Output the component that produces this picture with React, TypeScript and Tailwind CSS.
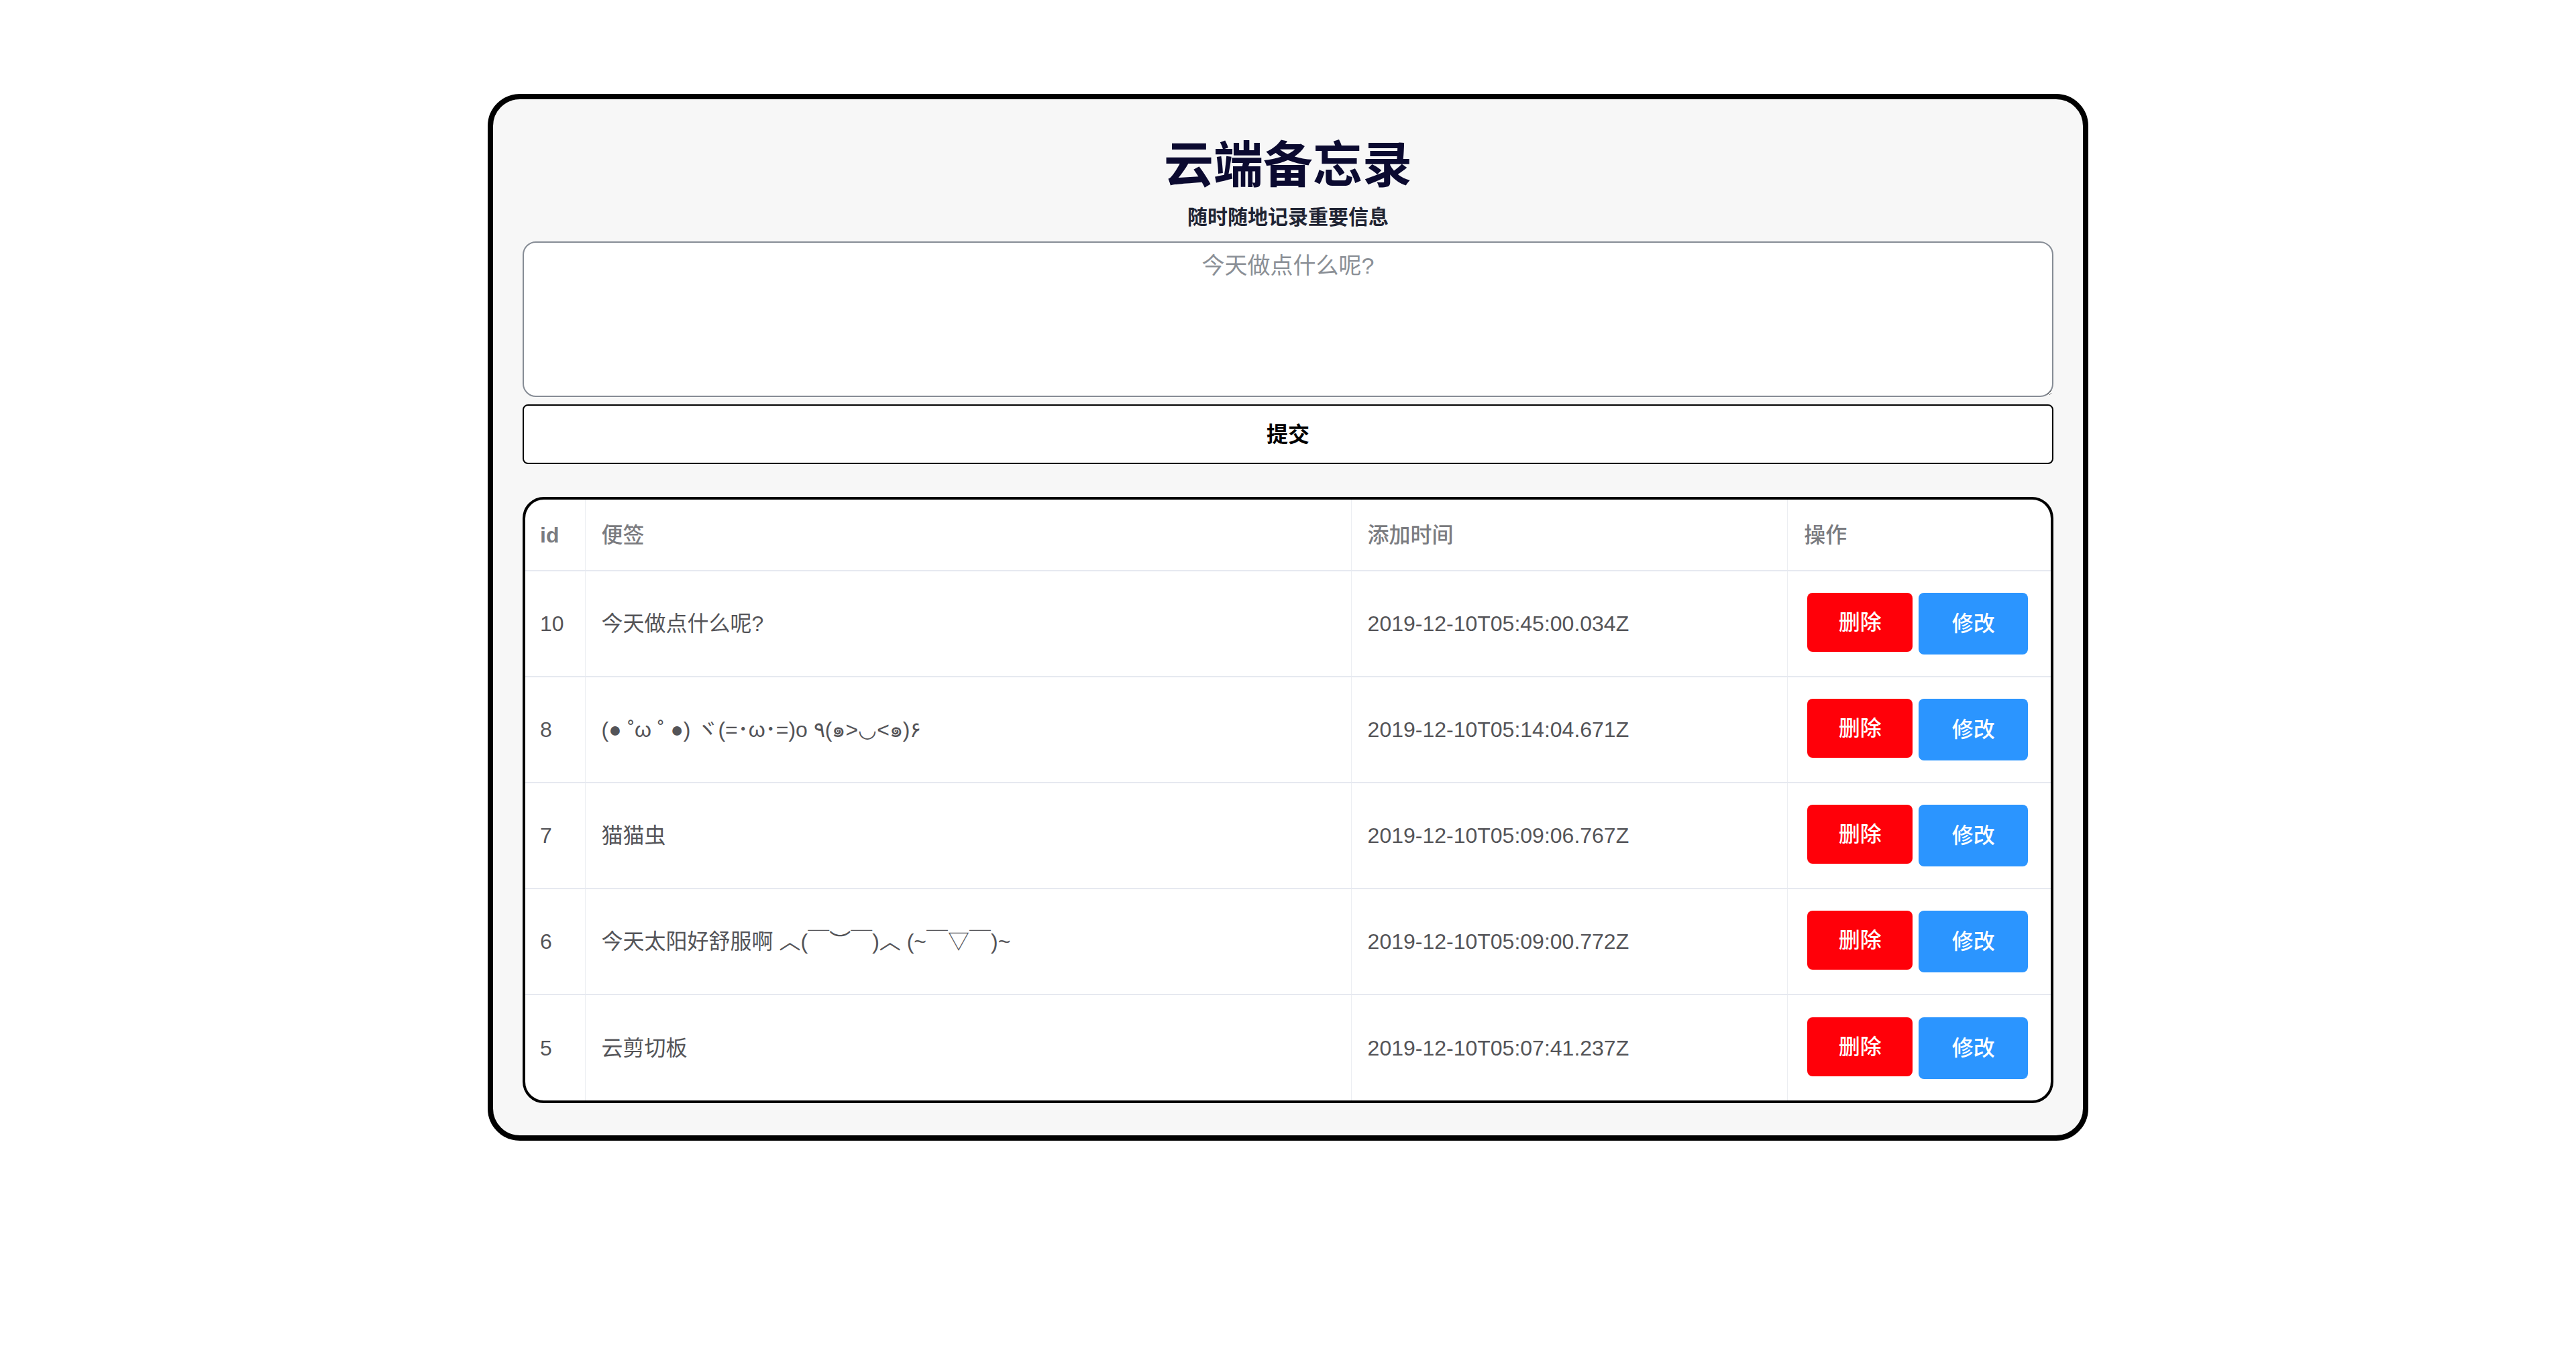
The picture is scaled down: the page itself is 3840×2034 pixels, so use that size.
import React, { useState } from "react";

type Note = {
  id: number;
  text: string;
  time: string;
};

const notes: Note[] = [
  { id: 10, text: "今天做点什么呢?", time: "2019-12-10T05:45:00.034Z" },
  { id: 8, text: "(● ˚ω ˚ ●) ヾ(=･ω･=)o ٩(๑>◡<๑)۶", time: "2019-12-10T05:14:04.671Z" },
  { id: 7, text: "猫猫虫", time: "2019-12-10T05:09:06.767Z" },
  { id: 6, text: "今天太阳好舒服啊 ︿(￣︶￣)︿ (~￣▽￣)~", time: "2019-12-10T05:09:00.772Z" },
  { id: 5, text: "云剪切板", time: "2019-12-10T05:07:41.237Z" },
];

const font = {
  fontFamily: '"Liberation Sans", "Noto Sans CJK SC", sans-serif',
};

export default function App() {
  const [draft, setDraft] = useState("");

  return (
    <div className="min-h-screen w-full bg-white pt-[140px]" style={font}>
      <div className="mx-auto flex w-[2386px] flex-col rounded-[48px] border-[8px] border-black bg-[#f7f7f7] px-[44px] pt-[54px] pb-[48px]">
        {/* header */}
        <h1 className="text-center text-[74px] leading-[90px] font-bold text-[#0b0a30]">
          云端备忘录
        </h1>
        <p className="mt-[12px] text-center text-[30px] leading-[40px] font-bold text-[#1f2433]">
          随时随地记录重要信息
        </p>

        <textarea
          value={draft}
          onChange={(e) => setDraft(e.target.value)}
          placeholder="今天做点什么呢?"
          className="mt-[16px] h-[232px] w-full rounded-[20px] border-2 border-[#868c95] bg-white px-4 pt-[12px] text-center text-[34px] leading-[44px] text-[#333] outline-none placeholder:text-[#8a8f96]"
        />

        <button className="mt-[11px] h-[89px] w-full rounded-[8px] border-2 border-black bg-white text-[32px] font-bold text-black">
          提交
        </button>

        {/* list */}
        <div className="mt-[49px] overflow-hidden rounded-[32px] border-4 border-black bg-white">
          <table className="w-full table-fixed border-collapse text-left">
            <colgroup>
              <col className="w-[89px]" />
              <col className="w-[1141px]" />
              <col className="w-[650px]" />
              <col className="w-[392px]" />
            </colgroup>
            <thead>
              <tr className="h-[106px] border-b-2 border-[#e6e9f0] text-[32px] text-[#7a7b80]">
                <th className="px-[22px] font-bold">id</th>
                <th className="border-l border-[#eceef2] px-[24px] font-medium">便签</th>
                <th className="border-l border-[#eceef2] px-[24px] font-medium">添加时间</th>
                <th className="border-l border-[#eceef2] px-[24px] font-medium">操作</th>
              </tr>
            </thead>
            <tbody>
              {notes.map((n, i) => (
                <tr
                  key={n.id}
                  className={`h-[158px] text-[32px] text-[#545458] ${
                    i < notes.length - 1 ? "border-b-2 border-[#e6e9f0]" : ""
                  }`}
                >
                  <td className="px-[22px]">{n.id}</td>
                  <td className="border-l border-[#eceef2] px-[24px] whitespace-nowrap">{n.text}</td>
                  <td className="border-l border-[#eceef2] px-[24px]">{n.time}</td>
                  <td className="border-l border-[#eceef2] pl-[29px]">
                    <div className="flex items-start gap-[9px]">
                      <button className="h-[88px] w-[157px] rounded-[8px] bg-[#ff0009] text-[32px] font-medium text-white">
                        删除
                      </button>
                      <button className="h-[92px] w-[163px] rounded-[8px] bg-[#2b95ff] text-[32px] font-medium text-white">
                        修改
                      </button>
                    </div>
                  </td>
                </tr>
              ))}
            </tbody>
          </table>
        </div>
      </div>
    </div>
  );
}
